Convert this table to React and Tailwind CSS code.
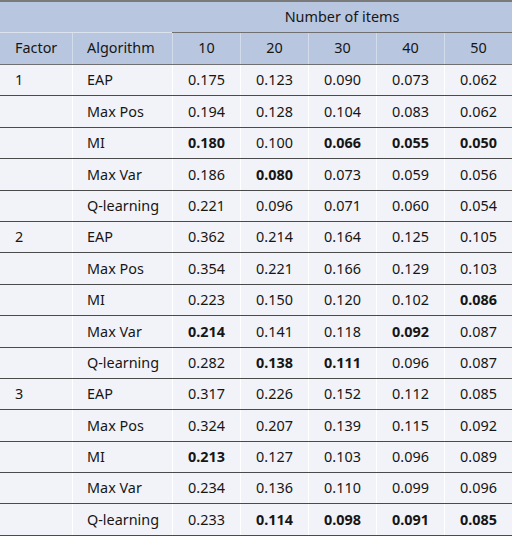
import React from "react";

const rows = [
  ["1", "EAP", ["0.175", "0.123", "0.090", "0.073", "0.062"], []],
  ["", "Max Pos", ["0.194", "0.128", "0.104", "0.083", "0.062"], []],
  ["", "MI", ["0.180", "0.100", "0.066", "0.055", "0.050"], [0, 2, 3, 4]],
  ["", "Max Var", ["0.186", "0.080", "0.073", "0.059", "0.056"], [1]],
  ["", "Q-learning", ["0.221", "0.096", "0.071", "0.060", "0.054"], []],
  ["2", "EAP", ["0.362", "0.214", "0.164", "0.125", "0.105"], []],
  ["", "Max Pos", ["0.354", "0.221", "0.166", "0.129", "0.103"], []],
  ["", "MI", ["0.223", "0.150", "0.120", "0.102", "0.086"], [4]],
  ["", "Max Var", ["0.214", "0.141", "0.118", "0.092", "0.087"], [0, 3]],
  ["", "Q-learning", ["0.282", "0.138", "0.111", "0.096", "0.087"], [1, 2]],
  ["3", "EAP", ["0.317", "0.226", "0.152", "0.112", "0.085"], []],
  ["", "Max Pos", ["0.324", "0.207", "0.139", "0.115", "0.092"], []],
  ["", "MI", ["0.213", "0.127", "0.103", "0.096", "0.089"], [0]],
  ["", "Max Var", ["0.234", "0.136", "0.110", "0.099", "0.096"], []],
  ["", "Q-learning", ["0.233", "0.114", "0.098", "0.091", "0.085"], [1, 2, 3, 4]],
];

const grid = "grid grid-cols-[72px_100px_repeat(5,68px)]";

export default function App() {
  return (
    <div
      className="w-[512px] h-[537px] bg-white text-[14.4px] text-[#161616]"
      style={{ fontFamily: '"Noto Sans", "Open Sans", sans-serif' }}
    >
      <div className="border-t-2 border-[#7a7a7a] bg-[#b8c7df]">
        <div className={`${grid} h-[31px]`}>
          <div className="col-span-2 border-b border-[#dbe3ef]" />
          <div className="col-span-5 flex items-center justify-center border-b border-[#707070]">
            Number of items
          </div>
        </div>
        <div className={`${grid} h-[32px] border-b border-[#707070]`}>
          <div className="flex items-center pl-[15px] pb-[1px]">Factor</div>
          <div className="flex items-center pl-[14px] pb-[1px] border-l border-[#d3dcea]">Algorithm</div>
          {["10", "20", "30", "40", "50"].map((n) => (
            <div key={n} className="flex items-center justify-center pb-[1px] border-l border-[#d3dcea]">
              {n}
            </div>
          ))}
        </div>
      </div>
      <div className="bg-[#f2f3f8]">
        {rows.map(([f, a, vals, bold], i) => (
          <div key={i} className={`${grid} h-[31.4px] border-b border-[#4a4a4a]`}>
            <div className="flex items-center pl-[15px]">{f}</div>
            <div className="flex items-center pl-[14px] border-l border-white">{a}</div>
            {vals.map((v, j) => (
              <div
                key={j}
                className={`flex items-center justify-center border-l border-white ${
                  bold.includes(j) ? "font-bold" : ""
                }`}
              >
                {v}
              </div>
            ))}
          </div>
        ))}
      </div>
    </div>
  );
}
